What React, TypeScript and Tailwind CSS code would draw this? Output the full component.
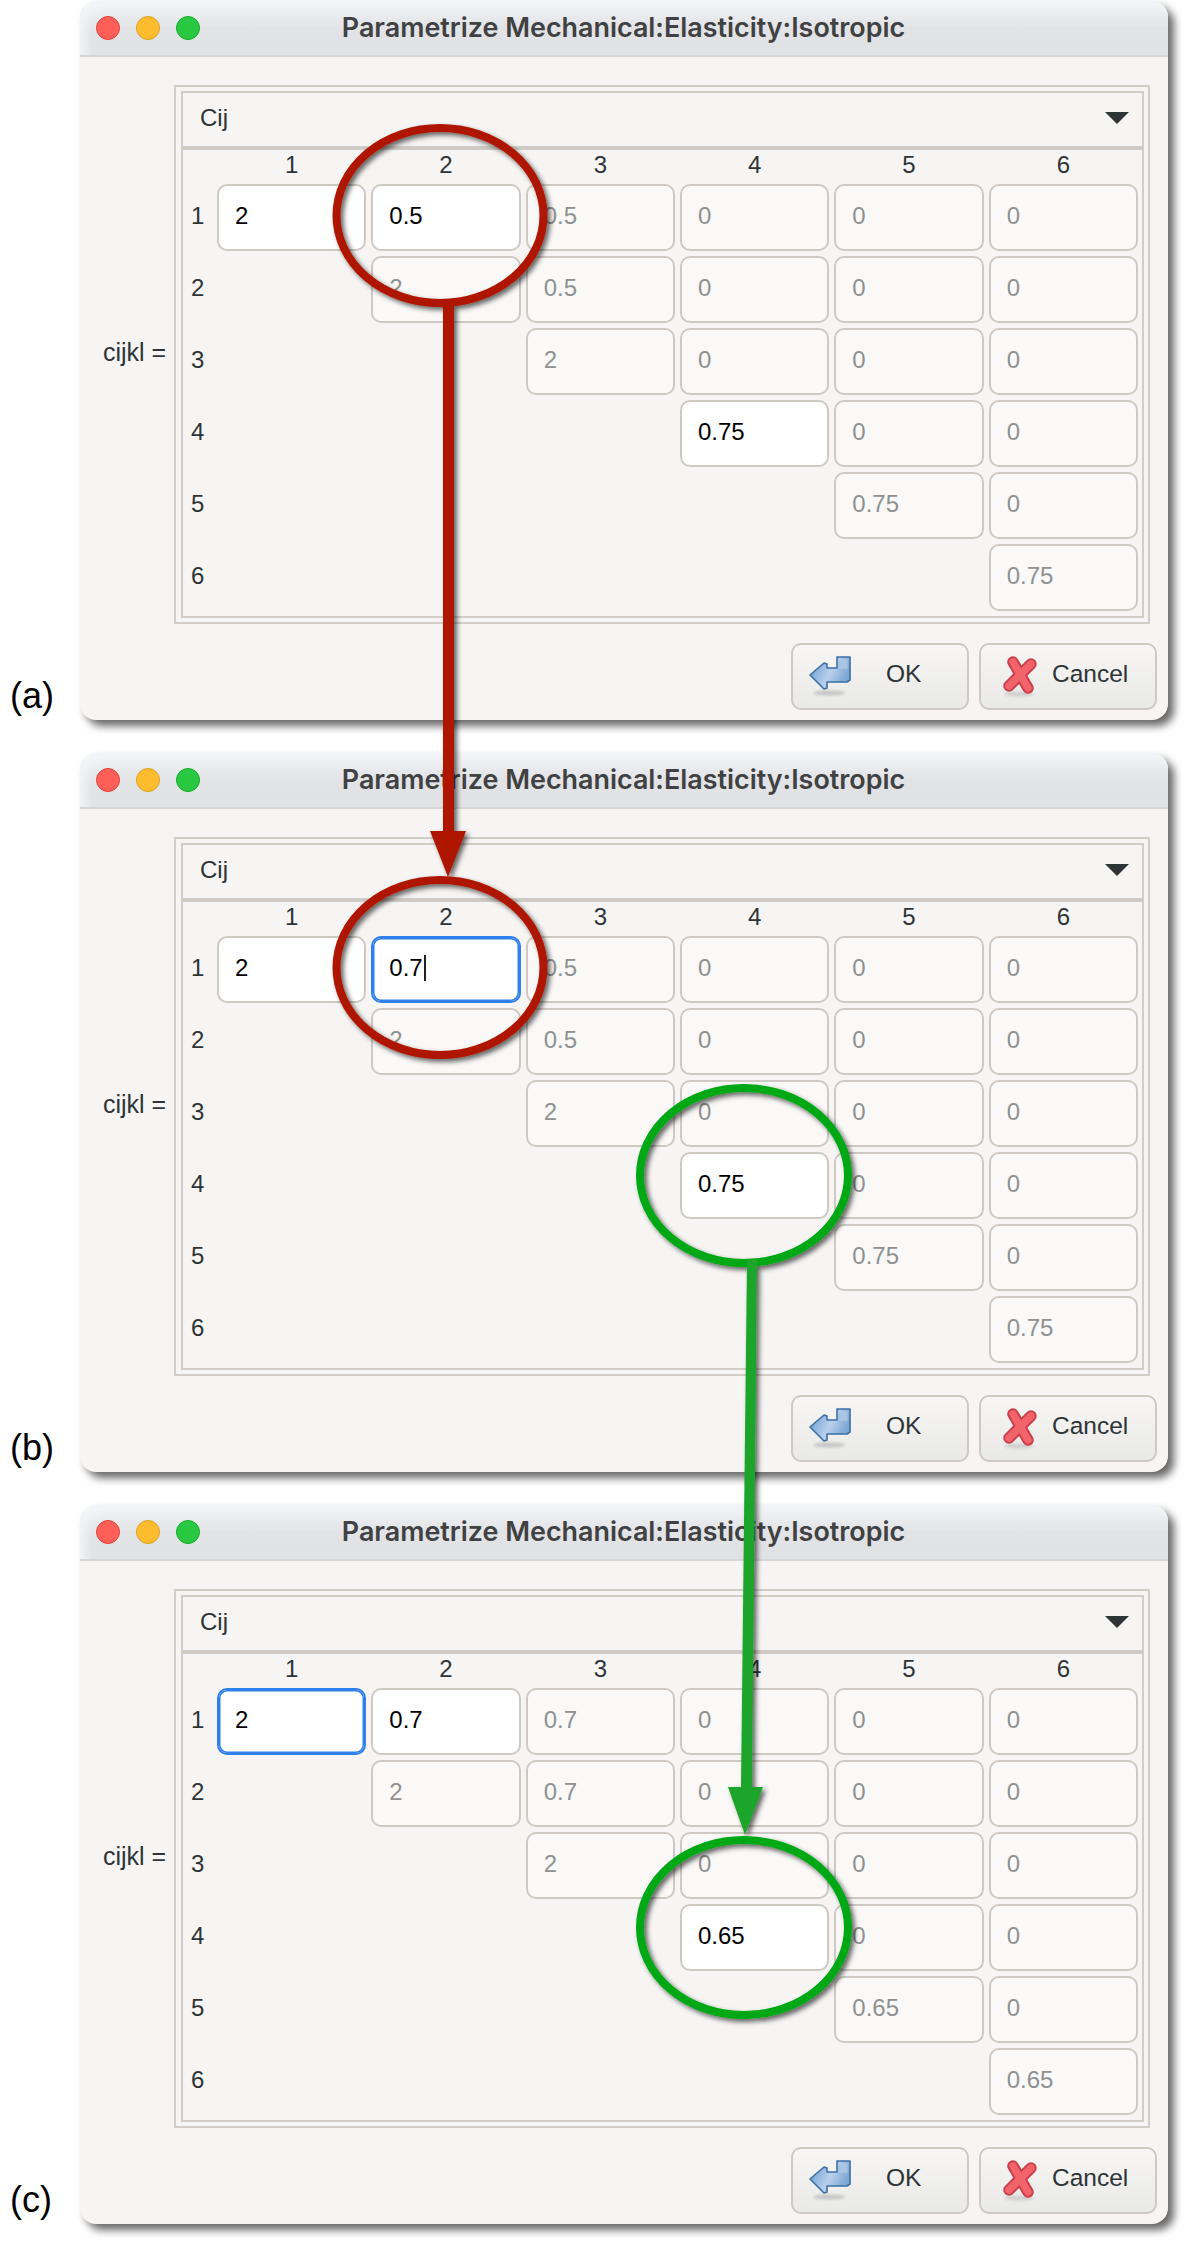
type Cell = { v: string; on?: boolean; focus?: boolean; caret?: boolean } | null;

const BODY = "font-['Liberation_Sans',Arial,sans-serif]";

function OkIcon() {
  return (
    <svg width="44" height="44" viewBox="0 0 44 44" className="shrink-0">
      <defs>
        <linearGradient id="okfill" x1="0" y1="0" x2="1" y2="0.4">
          <stop offset="0" stopColor="#5f95d2" />
          <stop offset="0.6" stopColor="#b9d0ea" />
          <stop offset="1" stopColor="#7ea6d4" />
        </linearGradient>
      </defs>
      <ellipse cx="20" cy="38" rx="16" ry="2.6" fill="#000" opacity="0.16" style={{ filter: "blur(1.5px)" }} />
      <g style={{ filter: "blur(0.5px)" }}>
        <path
          d="M1 20 L15 8 L18 9 L18 13 L28 13 L28 2 L41 2 L41 25 L38 27 L18 27 L18 33 L15 34 Z"
          fill="url(#okfill)"
          stroke="#3b6ea8"
          strokeWidth="1.6"
          strokeLinejoin="round"
        />
        <path d="M31 4.5 H38.5 V14 H31 Z" fill="#a9c4e4" />
      </g>
    </svg>
  );
}

function CancelIcon() {
  return (
    <svg width="38" height="44" viewBox="0 0 38 44" className="shrink-0">
      <ellipse cx="16" cy="39" rx="15" ry="2.4" fill="#000" opacity="0.12" style={{ filter: "blur(1.5px)" }} />
      <g fill="none" strokeLinecap="round" style={{ filter: "blur(0.5px)" }}>
        <path d="M10 7 L25 33 M28 9 L6 31" stroke="#c9404a" strokeWidth="11.5" />
        <path d="M10 7 L25 33 M28 9 L6 31" stroke="#f2636b" strokeWidth="7.5" />
      </g>
    </svg>
  );
}

function MatrixCell({ cell }: { cell: Cell }) {
  if (!cell) return <div />;
  const base = "h-[67px] rounded-[10px] border-2 pl-[16px] flex items-center text-[24px] pb-[3px]";
  let look = "bg-[#faf9f8] border-[#cfc9c3] text-[#8f9191]";
  if (cell.on) look = "bg-white border-[#cfc9c3] text-black";
  if (cell.focus) look = "bg-white border-[#2f80e8] shadow-[inset_0_0_0_1.5px_#2f80e8] text-black";
  return (
    <div className={`${base} ${look}`}>
      {cell.v}
      {cell.caret && <span className="inline-block w-[2px] h-[26px] bg-[#222] ml-[1px]" />}
    </div>
  );
}

function Dialog({ rows }: { rows: Cell[][] }) {
  return (
    <div className={`${BODY} relative w-[1088px] h-[719px] flex flex-col bg-[#f6f5f4] rounded-[16px] shadow-[6px_6px_9px_rgba(0,0,0,0.6)]`}>
      <div className="relative h-[56px] shrink-0 flex items-center justify-center rounded-t-[16px] border-b-2 border-[#d8d6d4] bg-gradient-to-b from-[#f2f4f7] via-[#e2e3e6] to-[#e1e2e4] shadow-[inset_12px_10px_12px_-6px_#f3f5f8]">
        <div className="absolute left-[16px] top-[15px] flex gap-[16px]">
          <span className="w-[24px] h-[24px] rounded-full bg-[#ff5f57] border border-[#e0443e]" />
          <span className="w-[24px] h-[24px] rounded-full bg-[#febc2e] border border-[#dea123]" />
          <span className="w-[24px] h-[24px] rounded-full bg-[#28c840] border border-[#1aab29]" />
        </div>
        <span className="font-['Inter',sans-serif] font-semibold text-[26.9px] text-[#3f4142] pb-[2px] pr-[1px]">
          Parametrize Mechanical:Elasticity:Isotropic
        </span>
      </div>

      <div className="flex items-center pl-[23px] pr-[18px] pt-[28px]">
        <div className="w-[71px] shrink-0 pb-[4px] text-[25px] text-[#2e3436] whitespace-nowrap">cijkl =</div>
        <div className="w-[976px] h-[539px] border-2 border-[#d3cdc7] pl-[5px] pr-[4px] pt-[4px] pb-[4px]">
          <div className="h-full border-2 border-[#d3cdc7] flex flex-col">
            <div className="h-[57px] shrink-0 flex items-center justify-between border-b-[4px] border-[#d0cac4] pl-[17px] pr-[13px] pb-[3px] text-[24px] text-[#2e3436]">
              <span>Cij</span>
              <span className="w-0 h-0 border-x-[12px] border-x-transparent border-t-[12px] border-t-[#2e3436]" />
            </div>
            <div className="grid grid-cols-[21px_repeat(6,149.33px)] gap-x-[5px] gap-y-[5px] pl-[8px] pt-[1px] text-[24px] text-[#2e3436]">
              <div className="h-[28px]" />
              {["1", "2", "3", "4", "5", "6"].map((n) => (
                <div key={n} className="h-[28px] flex items-center justify-center text-[24px]">{n}</div>
              ))}
              {rows.map((row, i) => (
                <>
                  <div key={`l${i}`} className="h-[67px] flex items-center text-[24px] pb-[3px]">{i + 1}</div>
                  {row.map((cell, j) => (
                    <MatrixCell key={`${i}-${j}`} cell={cell} />
                  ))}
                </>
              ))}
            </div>
          </div>
        </div>
      </div>

      <div className="flex justify-end gap-[10px] pr-[11px] pt-[19px]">
        <button className="w-[178px] h-[67px] rounded-[10px] border-2 border-[#cfc9c3] bg-gradient-to-b from-[#f7f6f5] to-[#e9e9e7] flex items-center pl-[16px] text-[24.5px] text-[#2e3436]">
          <OkIcon />
          <span className="ml-[33px] pb-[5px]">OK</span>
        </button>
        <button className="w-[178px] h-[67px] rounded-[10px] border-2 border-[#cfc9c3] bg-gradient-to-b from-[#f7f6f5] to-[#e9e9e7] flex items-center pl-[22px] text-[24.5px] text-[#2e3436]">
          <CancelIcon />
          <span className="ml-[11px] pb-[5px]">Cancel</span>
        </button>
      </div>
    </div>
  );
}

const g = (v: string): Cell => ({ v });
const a = (v: string): Cell => ({ v, on: true });

function panel(first: Cell, second: Cell, r1: string, r2: string, active: string): Cell[][] {
  return [
    [first, second, g(r1), g("0"), g("0"), g("0")],
    [null, g("2"), g(r2), g("0"), g("0"), g("0")],
    [null, null, g("2"), g("0"), g("0"), g("0")],
    [null, null, null, a(active), g("0"), g("0")],
    [null, null, null, null, g(active), g("0")],
    [null, null, null, null, null, g(active)],
  ];
}

const PANELS = [
  { label: "(a)", rows: panel(a("2"), a("0.5"), "0.5", "0.5", "0.75") },
  { label: "(b)", rows: panel(a("2"), { v: "0.7", focus: true, caret: true }, "0.5", "0.5", "0.75") },
  { label: "(c)", rows: panel({ v: "2", focus: true }, a("0.7"), "0.7", "0.7", "0.65") },
];

// circles and arrows drawn over the dialogs
function Annotations() {
  return (
    <svg width="1188" height="2244" className="absolute left-0 top-0 pointer-events-none">
      <defs>
        <filter id="drop" x="-20%" y="-20%" width="140%" height="140%">
          <feDropShadow dx="3" dy="3" stdDeviation="2.5" floodColor="#000" floodOpacity="0.6" />
        </filter>
      </defs>
      <g filter="url(#drop)">
        <ellipse cx="440" cy="215.5" rx="103.5" ry="87.5" fill="none" stroke="#ae1700" strokeWidth="8" />
        <ellipse cx="440" cy="967.5" rx="103.5" ry="87.5" fill="none" stroke="#ae1700" strokeWidth="8" />
        <path d="M443 302 H454 V831 H466 L448 877 L430 831 H443 Z" fill="#ae1700" />
      </g>
      <g filter="url(#drop)">
        <ellipse cx="744" cy="1175.5" rx="104" ry="87.5" fill="none" stroke="#00a814" strokeWidth="8" />
        <ellipse cx="744" cy="1927.5" rx="104" ry="87.5" fill="none" stroke="#00a814" strokeWidth="8" />
        <path d="M747 1260 L757 1260 L752 1787 L763 1787 L745 1835 L728 1787 L741 1787 Z" fill="#1ca52c" />
      </g>
    </svg>
  );
}

export default function App() {
  return (
    <div className="relative w-[1188px] h-[2244px] bg-white overflow-hidden">
      <div className="flex flex-col gap-[33px] pt-[1px]">
        {PANELS.map((p) => (
          <div key={p.label} className="flex items-end">
            <div className={`${BODY} w-[80px] shrink-0 pl-[10px] pb-[4px] text-[36px] leading-[40px] text-black`}>{p.label}</div>
            <Dialog rows={p.rows} />
          </div>
        ))}
      </div>
      <Annotations />
    </div>
  );
}
